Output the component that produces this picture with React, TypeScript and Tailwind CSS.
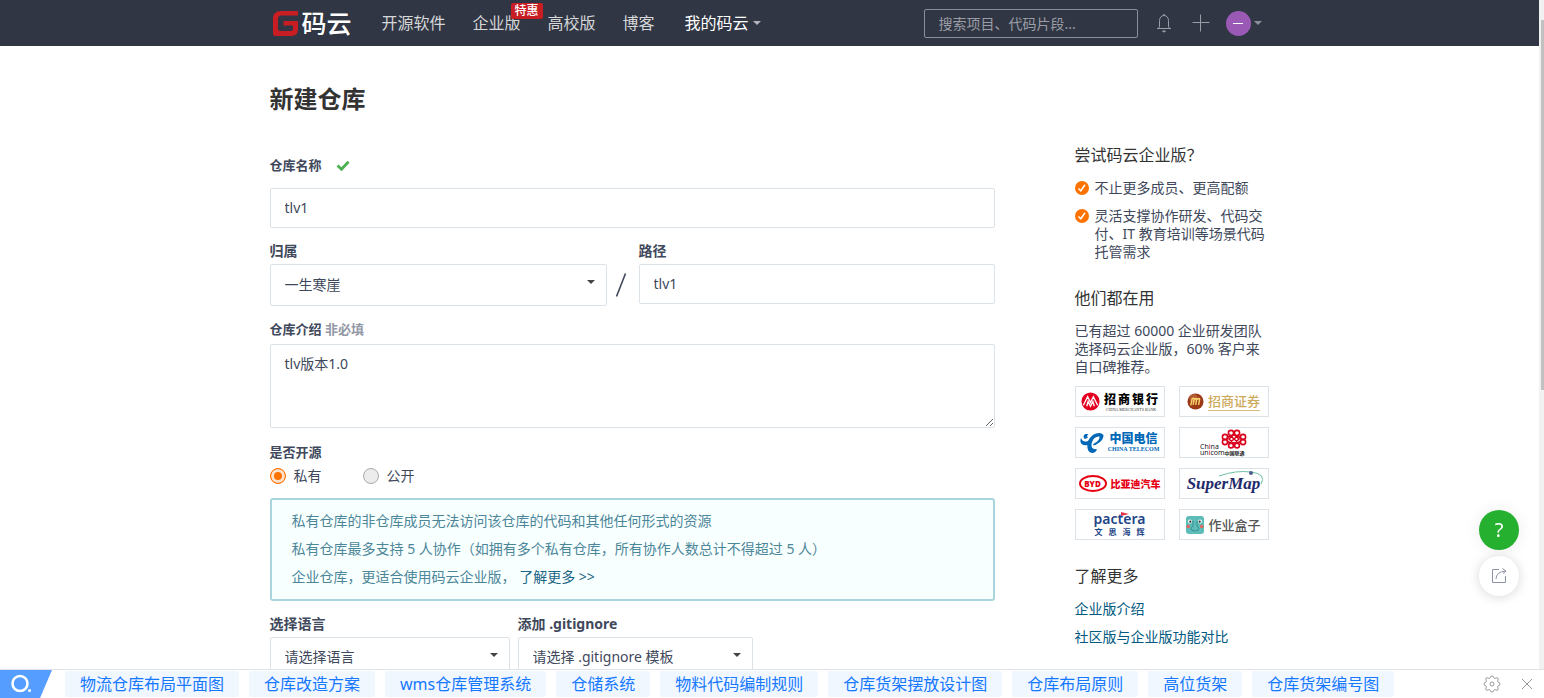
import React from "react";

interface LogoBoxProps {
  label: string;
  children: React.ReactNode;
}

const navLinks = [
  { name: "开源软件" },
  { name: "企业版", badge: "特惠" },
  { name: "高校版" },
  { name: "博客" },
];

const suggestions = [
  "物流仓库布局平面图",
  "仓库改造方案",
  "wms仓库管理系统",
  "仓储系统",
  "物料代码编制规则",
  "仓库货架摆放设计图",
  "仓库布局原则",
  "高位货架",
  "仓库货架编号图",
];

const perks = [
  "不止更多成员、更高配额",
  "灵活支撑协作研发、代码交付、IT 教育培训等场景代码托管需求",
];

// Shared styles
const inputStyle =
  "block w-full rounded-[2px] border border-[#dce3e8] bg-white px-3.5 text-sm text-[#40485b] outline-none";
const labelStyle = "block font-bold text-[#40485b] leading-5";

function Caret({ className }: { className?: string }) {
  return (
    <svg viewBox="0 0 10 5" className={className} fill="currentColor" aria-hidden="true">
      <path d="M0 0h10L5 5z" />
    </svg>
  );
}

function SelectBox({ id, value, height }: { id: string; value: string; height: string }) {
  return (
    <div className="relative">
      <select
        id={id}
        defaultValue={value}
        className={`${inputStyle} ${height} appearance-none text-[#222]`}
      >
        <option>{value}</option>
      </select>
      <Caret className="pointer-events-none absolute right-3 top-4 h-1 w-2 text-[#444]" />
    </div>
  );
}

function LogoBox({ label, children }: LogoBoxProps) {
  return (
    <a
      href="#"
      aria-label={label}
      className="flex h-[31px] items-center justify-center gap-1 border border-[#dce3e8] bg-white"
    >
      {children}
    </a>
  );
}

function Header() {
  return (
    <header className="shrink-0 bg-[#303643]">
      <div className="mx-auto flex h-[46px] max-w-[1000px] items-center">
        <div className="flex items-center gap-[30px]">
          <a href="#" className="flex items-center gap-1 pl-[3px]">
            <svg viewBox="0 0 25 25" className="size-[25px]" aria-hidden="true">
              <path
                d="M8 0h17v4.500H8.500Q5 4.500 5 8v9.500Q5 20 7.500 20h10q2.500 0 2.500-2.500V14.500h-9.500V10H25v8.500Q25 25 18.500 25H2.500Q0 25 0 22.500V8Q0 0 8 0z"
                fill="#c71d23"
              />
            </svg>
            <span className="text-[25px] font-medium leading-7 text-white">码云</span>
          </a>
          <nav className="flex items-center gap-[27px]">
            {navLinks.map((l) => (
              <a key={l.name} href="#" className="relative text-base leading-6 text-[#d6d7d9]">
                {l.name}
                {l.badge && (
                  <span className="absolute -right-[22px] -top-2 rounded-[2px] bg-[#c71d23] px-1 text-xs font-medium leading-4 text-white">
                    {l.badge}
                  </span>
                )}
              </a>
            ))}
          </nav>
          <button type="button" className="flex items-center gap-1 text-base leading-6 text-white">
            我的码云
            <Caret className="h-1 w-2 text-[#b4b6bb]" />
          </button>
        </div>
        <div className="ml-auto flex items-center pr-2">
          <input
            type="text"
            aria-label="搜索"
            placeholder="搜索项目、代码片段..."
            className="mr-[18px] h-[29px] w-[214px] rounded-[2px] border border-[#8b8f99] bg-transparent px-3.5 text-sm text-white outline-none placeholder:text-[#9a9da5]"
          />
          <button type="button" aria-label="通知" className="mr-5">
            <svg viewBox="0 0 16 20" className="h-5 w-4" fill="none" stroke="#9b9ea6" aria-hidden="true">
              <path d="M1 15.500h14M2.500 15.500q1-1 1-2.500V7.500a4.500 5 0 0 1 9 0V13q0 1.500 1 2.500M7 2.500a1 1 0 0 1 2 0" />
              <path d="M6.500 18h3l-1 1h-1z" fill="#9b9ea6" />
            </svg>
          </button>
          <button type="button" aria-label="新建" className="mr-4">
            <svg viewBox="0 0 18 18" className="size-[18px]" stroke="#9b9ea6" aria-hidden="true">
              <path d="M8.500 .5v17M.5 8.500h17" />
            </svg>
          </button>
          <button type="button" aria-label="个人菜单" className="flex items-center gap-[3px]">
            <span className="flex size-[25px] items-center justify-center rounded-full bg-[#9b59b6]">
              <span className="h-px w-2.5 bg-white" />
            </span>
            <Caret className="h-1 w-2 text-[#8b8f99]" />
          </button>
        </div>
      </div>
    </header>
  );
}

function RepoForm() {
  return (
    <form className="min-w-0 flex-1">
      <div className="flex items-center gap-3.5">
        <label htmlFor="name" className={`${labelStyle} text-[13px]`}>
          仓库名称
        </label>
        <svg viewBox="0 0 14 11" className="h-[11px] w-3.5" fill="none" aria-hidden="true">
          <path d="M1.500 5.500l4 3.800 7-7.500" stroke="#4caf50" strokeWidth="2.800" />
        </svg>
      </div>
      <input id="name" type="text" defaultValue="tlv1" className={`${inputStyle} mt-[13px] h-10 pb-0.5`} />

      <div className="mt-[13px] flex">
        <div className="w-[337px]">
          <label htmlFor="owner" className={`${labelStyle} mb-[3px] text-sm`}>
            归属
          </label>
          <SelectBox id="owner" value="一生寒崖" height="h-[42px]" />
        </div>
        <div className="flex w-8 justify-center pr-1 pt-8">
          <svg viewBox="0 0 12 24" className="h-6 w-3" aria-hidden="true">
            <path d="M1.500 23.500L10.500 .5" stroke="#40485b" strokeWidth="1.600" />
          </svg>
        </div>
        <div className="flex-1">
          <label htmlFor="path" className={`${labelStyle} mb-[3px] text-sm`}>
            路径
          </label>
          <input id="path" type="text" defaultValue="tlv1" className={`${inputStyle} h-10 pb-0.5`} />
        </div>
      </div>

      <label htmlFor="desc" className={`${labelStyle} mt-[13px] text-[13px]`}>
        仓库介绍 <span className="text-[#9298a5]">非必填</span>
      </label>
      <textarea
        id="desc"
        defaultValue="tlv版本1.0"
        className={`${inputStyle} mt-[5px] h-[84px] py-[9px] leading-5`}
      />

      <fieldset className="mt-3.5">
        <legend className={`${labelStyle} text-[13px]`}>是否开源</legend>
        <div className="mt-1 flex gap-[41px] text-sm leading-5 text-[#40485b]">
          {["私有", "公开"].map((v, i) => (
            <label key={v} className="flex items-center gap-2">
              <input
                type="radio"
                name="visibility"
                defaultChecked={i === 0}
                className="size-4 appearance-none rounded-full border border-[#a9a9a9] bg-[#ececec] checked:border-[#fe7300] checked:bg-[#fe7300] checked:shadow-[inset_0_0_0_3px_#ffe3cc]"
              />
              {v}
            </label>
          ))}
        </div>
      </fieldset>

      <div className="mt-3 rounded-[3px] border-2 border-[#a9d5de] bg-[#f8ffff] px-5 pb-2 pt-[7px] text-sm leading-7 text-[#4c8699]">
        <p>私有仓库的非仓库成员无法访问该仓库的代码和其他任何形式的资源</p>
        <p>私有仓库最多支持 5 人协作（如拥有多个私有仓库，所有协作人数总计不得超过 5 人）</p>
        <p>
          企业仓库，更适合使用码云企业版，{" "}
          <a href="#" className="text-[#1c6584]">
            了解更多 &gt;&gt;
          </a>
        </p>
      </div>

      <div className="mt-[13px] flex gap-2">
        <div className="w-[240px]">
          <label htmlFor="lang" className={`${labelStyle} mb-[3px] text-sm`}>
            选择语言
          </label>
          <SelectBox id="lang" value="请选择语言" height="h-10" />
        </div>
        <div className="w-[235px]">
          <label htmlFor="ignore" className={`${labelStyle} mb-[3px] text-sm`}>
            添加 .gitignore
          </label>
          <SelectBox id="ignore" value="请选择 .gitignore 模板" height="h-10" />
        </div>
      </div>
    </form>
  );
}

function CustomerLogos() {
  return (
    <div className="mt-2.5 grid grid-cols-[90px_90px] gap-x-3.5 gap-y-2.5">
      <LogoBox label="招商银行">
        <svg viewBox="0 0 20 20" className="size-[19px]" aria-hidden="true">
          <circle cx="10" cy="10" r="9.500" fill="#e60020" />
          <path d="M2.500 14L7 5l3 6 3-6 4.500 9M6 15l1.500-5L10 15l2.500-5L14 15" stroke="#fff" strokeWidth="1.400" fill="none" />
        </svg>
        <span className="flex flex-col items-center">
          <span className="flex gap-0.5 text-[12px] font-black leading-[15px] text-black">
            <span>招</span>
            <span>商</span>
            <span>银</span>
            <span>行</span>
          </span>
          <span className="whitespace-nowrap font-['Liberation_Serif',serif] text-[4px] leading-[5px] text-[#333]">
            CHINA MERCHANTS BANK
          </span>
        </span>
      </LogoBox>
      <LogoBox label="招商证券">
        <svg viewBox="0 0 18 18" className="size-[17px]" aria-hidden="true">
          <circle cx="9" cy="9" r="8.500" fill="#9c3a18" />
          <circle cx="7" cy="5.500" r="4.500" fill="#c77a4a" opacity=".5" />
          <path d="M4 13L5.500 6q2.500-1.500 2 1L6.500 12.500M7.500 7q3-2.500 2.700 0L9.200 12.500M10.300 7q3.500-2.500 3 0l-1 5.500" stroke="#fbd36b" strokeWidth="1.500" fill="none" />
        </svg>
        <span className="border-b border-[#d9bd7c] text-[13px] font-medium leading-[17px] text-[#cda95c]">招商证券</span>
      </LogoBox>
      <LogoBox label="中国电信">
        <svg viewBox="0 0 24 22" className="h-[22px] w-6" aria-hidden="true">
          <path
            d="M1 6q2 5 7 3Q11 3 16 1.500 21 0 23.500 3 24 8 17 12q-2 1.500-4 1.300 0-1.300 1.500-2Q20 8 19.500 4.500 16 4 13.500 7 11 11 11.500 14q.5 3.500 5.500 3.200-1.500 4-5 3.800Q7 20 7.300 13 2 14 .5 10 0 8 1 6z"
            fill="#0068b7"
          />
          <path d="M5 2Q2 5 5 7L8 5.500Q6 4 8.500 2z" fill="#0068b7" />
        </svg>
        <span className="flex flex-col items-center">
          <span className="text-[12px] font-black leading-[14px] text-[#0068b7]">中国电信</span>
          <span className="whitespace-nowrap font-['Liberation_Serif',serif] text-[6px] font-bold leading-[7px] text-[#0068b7]">
            CHINA TELECOM
          </span>
        </span>
      </LogoBox>
      <LogoBox label="中国联通">
        <span className="flex flex-col">
          <svg viewBox="0 0 26 20" className="ml-[21px] h-5 w-[26px]" fill="none" stroke="#d9001b" strokeWidth="1.600" aria-hidden="true">
            <path d="M8.500 6L13 10l4.500-4M8.500 14l4.500-4 4.500 4M8 10l5-4.500 5 4.500-5 4.500z" />
            <circle cx="10" cy="4" r="2.600" />
            <circle cx="16" cy="4" r="2.600" />
            <circle cx="4" cy="8" r="2.600" />
            <circle cx="4" cy="13" r="2.600" />
            <circle cx="22" cy="8" r="2.600" />
            <circle cx="22" cy="13" r="2.600" />
            <circle cx="10" cy="16.500" r="2.400" />
            <circle cx="16" cy="16.500" r="2.400" />
            <path d="M6 9l4-2.500M6 12l4 2.500M20 9l-4-2.500M20 12l-4 2.500" />
          </svg>
          <span className="-mt-[5px] text-[7px] leading-[5px] text-[#222]">
            Ch<span className="text-[#d9001b]">i</span>na
          </span>
          <span className="whitespace-nowrap text-[7px] leading-[7px] text-[#222]">
            un<span className="text-[#d9001b]">i</span>com<span className="text-[5px] font-bold">中国联通</span>
          </span>
        </span>
      </LogoBox>
      <LogoBox label="比亚迪汽车">
        <span className="flex h-[17px] w-7 items-center justify-center rounded-[50%] border-2 border-[#e60012] text-[8px] font-black leading-none text-[#e60012]">
          BYD
        </span>
        <span className="whitespace-nowrap text-[10px] font-black text-[#e60012]">比亚迪汽车</span>
      </LogoBox>
      <LogoBox label="SuperMap">
        <span className="relative font-['Liberation_Serif',serif] text-[17px] font-bold italic leading-5 text-[#232a6a]">
          SuperMap
          <svg viewBox="0 0 46 20" className="absolute -right-1 -top-1 h-5 w-[46px]" fill="none" aria-hidden="true">
            <path d="M1 6Q18 0 33 2q16 2 10 12" stroke="#6cbfa4" />
            <circle cx="33" cy="3" r="2" fill="#4d5c8f" />
          </svg>
        </span>
      </LogoBox>
      <LogoBox label="文思海辉">
        <span className="flex flex-col items-center text-[#1d4687]">
          <span className="relative text-[14px] font-semibold leading-[14px]">
            pactera
            <svg viewBox="0 0 8 4" className="absolute right-4 top-0 h-1 w-2" aria-hidden="true">
              <path d="M0 0l8 2-8 2z" fill="#e2334a" />
            </svg>
          </span>
          <span className="flex gap-1.5 text-[8px] font-bold leading-[11px]">
            <span>文</span>
            <span>思</span>
            <span>海</span>
            <span>辉</span>
          </span>
        </span>
      </LogoBox>
      <LogoBox label="作业盒子">
        <svg viewBox="0 0 18 18" className="size-[18px]" aria-hidden="true">
          <rect width="18" height="18" rx="3" fill="#5bbcb8" />
          <circle cx="4" cy="5.500" r="2" fill="#fff" />
          <circle cx="14" cy="5.500" r="2" fill="#fff" />
          <circle cx="4.300" cy="5.700" r="1.100" fill="#333" />
          <circle cx="13.700" cy="5.700" r="1.100" fill="#333" />
          <circle cx="2.300" cy="10.500" r="1.700" fill="#f0605a" />
          <circle cx="15.700" cy="10.500" r="1.700" fill="#f0605a" />
          <path d="M7 5v5q-3 2-1.500 4 3.500 2 7 0Q14 12 11 10V5" fill="none" stroke="#398f92" />
        </svg>
        <span className="text-[13px] font-medium text-[#555]">作业盒子</span>
      </LogoBox>
    </div>
  );
}

function Sidebar() {
  return (
    <aside className="w-[195px] shrink-0 text-sm leading-[18px] text-[#40485b]">
      <h3 className="text-base leading-6 text-[#333]">尝试码云企业版？</h3>
      <ul className="mt-3 flex flex-col gap-2.5">
        {perks.map((p) => (
          <li key={p} className="flex gap-1.5">
            <svg viewBox="0 0 14 14" className="mt-0.5 size-3.5 shrink-0" aria-hidden="true">
              <circle cx="7" cy="7" r="7" fill="#fe7300" />
              <path d="M3.500 7.500l2.300 2.300 4.200-6" stroke="#fff" strokeWidth="1.500" fill="none" />
            </svg>
            <span className="flex-1">{p}</span>
          </li>
        ))}
      </ul>
      <h3 className="mt-[25px] text-base leading-6 text-[#333]">他们都在用</h3>
      <p className="mt-3">已有超过 60000 企业研发团队选择码云企业版，60% 客户来自口碑推荐。</p>
      <CustomerLogos />
      <h3 className="mt-6 text-base leading-6 text-[#333]">了解更多</h3>
      <div className="mt-3 flex flex-col items-start gap-2.5 text-[#005980]">
        <a href="#">企业版介绍</a>
        <a href="#">社区版与企业版功能对比</a>
      </div>
    </aside>
  );
}

function SuggestBar() {
  return (
    <div className="flex h-[29px] shrink-0 items-center overflow-hidden border-t border-[#dfe2e6] bg-white">
      <button
        type="button"
        aria-label="搜索"
        className="mr-[13px] flex h-full w-[52px] shrink-0 items-center bg-[#559eff] pl-2.5 [clip-path:polygon(0_0,100%_0,77%_100%,0_100%)]"
      >
        <svg viewBox="0 0 22 20" className="h-5 w-[22px]" aria-hidden="true">
          <circle cx="10" cy="9.500" r="7.500" fill="none" stroke="#fff" strokeWidth="2.600" />
          <circle cx="19.500" cy="16.500" r="1.500" fill="#fff" />
        </svg>
      </button>
      <div className="flex min-w-0 flex-1 gap-2.5 overflow-hidden">
        {suggestions.map((s) => (
          <a
            key={s}
            href="#"
            className="shrink-0 rounded-[2px] bg-[#f0f7ff] px-[15px] text-base leading-[26px] text-[#1677ff]"
          >
            {s}
          </a>
        ))}
      </div>
      <button type="button" aria-label="设置" className="mr-[21px]">
        <svg viewBox="0 0 18 18" className="size-[18px]" fill="none" stroke="#999" aria-hidden="true">
          <path
            d="M7 3q.5-2 2-2t2 2q.5.600 1.200.300 1.800-1 2.700-.2t-.2 2.700q-.3.700.3 1.200 2 .5 2 2t-2 2q-.6.500-.3 1.200 1 1.800.2 2.700t-2.700-.2q-.7-.3-1.200.3-.5 2-2 2t-2-2q-.5-.6-1.200-.3-1.800 1-2.700.2t.2-2.700q.3-.7-.3-1.200-2-.5-2-2t2-2q.6-.5.3-1.200-1-1.800-.2-2.700t2.700.2Q6.500 3.600 7 3z"
            strokeLinejoin="round"
          />
          <circle cx="9" cy="9" r="2" />
        </svg>
      </button>
      <button type="button" aria-label="关闭" className="mr-3">
        <svg viewBox="0 0 10 10" className="size-2.5" stroke="#999" aria-hidden="true">
          <path d="M0 0l10 10M10 0L0 10" />
        </svg>
      </button>
    </div>
  );
}

function FloatButtons() {
  return (
    <div className="fixed bottom-[102px] right-[25px] flex flex-col gap-1.5">
      <button
        type="button"
        className="size-10 rounded-full bg-[#25b030] text-xl text-white shadow-[0_0_16px_rgba(0,0,0,0.08)]"
      >
        ?
      </button>
      <button
        type="button"
        aria-label="分享"
        className="flex size-10 items-center justify-center rounded-full bg-white shadow-[0_1px_12px_rgba(0,0,0,0.16)]"
      >
        <svg viewBox="0 0 16 16" className="size-4" fill="none" stroke="#8c92a4" aria-hidden="true">
          <path d="M8 1.500H1.500v13h13V8" />
          <path d="M5 11q0-7 9.500-8M11.500 .5l3.500 2.500-3 2.500" />
        </svg>
      </button>
    </div>
  );
}

export default function App() {
  return (
    <div className="flex h-screen flex-col bg-white font-['Noto_Sans','Noto_Sans_CJK_SC',sans-serif]">
      <div className="flex min-h-0 flex-1">
        <div className="flex min-w-0 flex-1 flex-col overflow-hidden">
          <Header />
          <main className="mx-auto w-full max-w-[1000px] flex-1 pt-[35px]">
            <h1 className="text-2xl font-bold leading-9 text-[#333]">新建仓库</h1>
            <div className="mt-[26px] flex gap-20">
              <div className="flex min-w-0 flex-1 pt-3">
                <RepoForm />
              </div>
              <Sidebar />
            </div>
          </main>
        </div>
        {/* scroll track */}
        <div className="w-[5px] shrink-0 bg-[#f1f1f1] pl-0.5 pt-5">
          <div className="h-[57%] bg-[#c1c1c1]" />
        </div>
      </div>
      <SuggestBar />
      <FloatButtons />
    </div>
  );
}
